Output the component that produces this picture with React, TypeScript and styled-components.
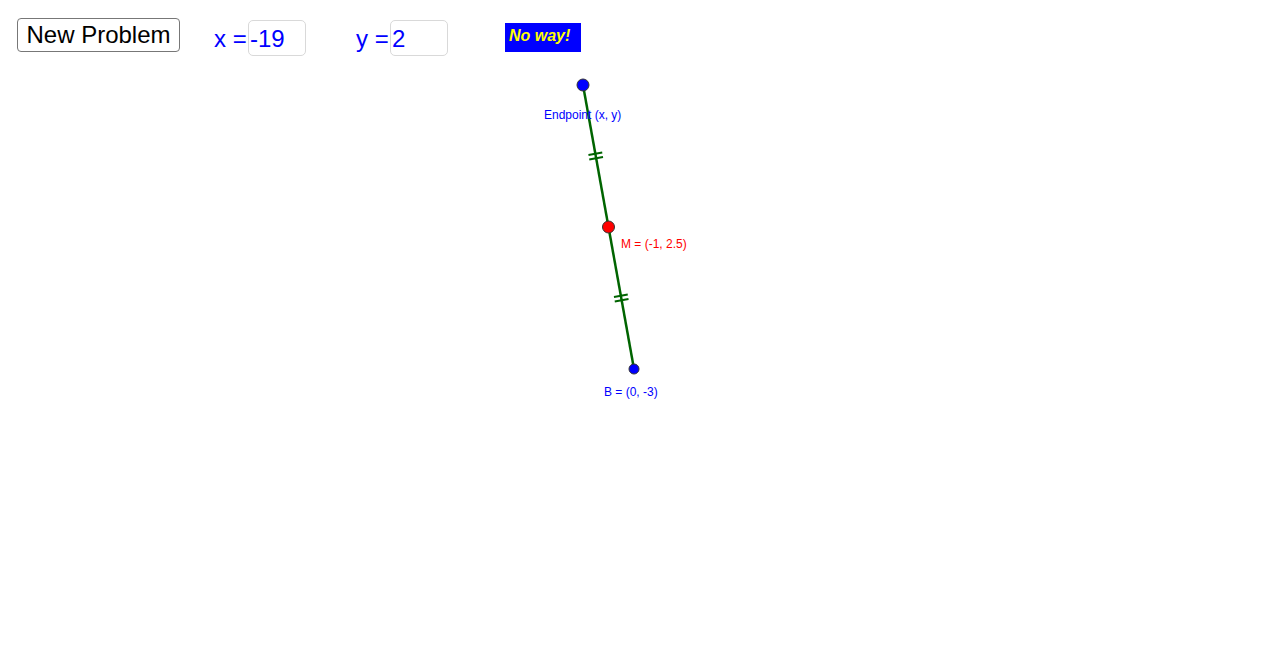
import React from "react";
import styled, { createGlobalStyle } from "styled-components";

const Global = createGlobalStyle`
  html, body { margin: 0; padding: 0; background: #ffffff; }
  body { font-family: "Liberation Sans", Arial, sans-serif; }
`;

const Page = styled.div`
  width: 1280px;
  height: 664px;
  background: #ffffff;
  overflow: hidden;
`;

const Toolbar = styled.div`
  display: flex;
  align-items: flex-start;
  height: 70px;
  padding-left: 17px;
  box-sizing: border-box;
`;

const Button = styled.button`
  margin-top: 18px;
  width: 163px;
  height: 34px;
  box-sizing: border-box;
  border: 1px solid #777777;
  border-radius: 4px;
  background: #ffffff;
  color: #000000;
  font-family: "Liberation Sans", Arial, sans-serif;
  font-size: 24px;
  line-height: 30px;
  padding: 0;
  text-align: center;
`;

const Field = styled.div<{ $gap: number }>`
  display: flex;
  align-items: center;
  margin-left: ${(p) => p.$gap}px;
  margin-top: 20px;
  height: 36px;
`;

const FieldLabel = styled.span`
  color: #0000ff;
  font-size: 24px;
  line-height: 36px;
  width: 34px;
  padding-top: 2px;
  white-space: pre;
`;

const Input = styled.div`
  width: 58px;
  height: 36px;
  box-sizing: border-box;
  border: 1px solid #d9d9d9;
  border-radius: 5px;
  color: #0000ff;
  font-size: 24px;
  line-height: 36px;
  padding-left: 1px;
`;

const Verdict = styled.div`
  margin-left: 57px;
  margin-top: 23px;
  width: 76px;
  height: 29px;
  box-sizing: border-box;
  background: #0000ff;
  color: #ffff00;
  font-weight: bold;
  font-style: italic;
  font-size: 16px;
  line-height: 26px;
  padding-left: 4px;
`;

const Canvas = styled.svg`
  display: block;
`;

const A = { x: 583, y: 85 };
const M = { x: 608.5, y: 227 };
const B = { x: 634, y: 369 };

function Ticks({ cx, cy }: { cx: number; cy: number }) {
  const dx = B.x - A.x;
  const dy = B.y - A.y;
  const len = Math.hypot(dx, dy);
  const ux = dx / len;
  const uy = dy / len;
  const px = uy;
  const py = -ux;
  const h = 7;
  return (
    <g stroke="#006400" strokeWidth={2}>
      {[-2.2, 2.2].map((o) => {
        const mx = cx + ux * o;
        const my = cy + uy * o;
        return (
          <line
            key={o}
            x1={mx - px * h}
            y1={my - py * h}
            x2={mx + px * h}
            y2={my + py * h}
          />
        );
      })}
    </g>
  );
}

export default function App() {
  return (
    <Page>
      <Global />
      <Toolbar>
        <Button>New Problem</Button>
        <Field $gap={34}>
          <FieldLabel>x =</FieldLabel>
          <Input>-19</Input>
        </Field>
        <Field $gap={50}>
          <FieldLabel>y =</FieldLabel>
          <Input>2</Input>
        </Field>
        <Verdict>No way!</Verdict>
      </Toolbar>
      <Canvas width={1280} height={594} viewBox="0 70 1280 594">
        <line x1={A.x} y1={A.y} x2={B.x} y2={B.y} stroke="#006400" strokeWidth={2.5} />
        <Ticks cx={(A.x + M.x) / 2} cy={(A.y + M.y) / 2} />
        <Ticks cx={(M.x + B.x) / 2} cy={(M.y + B.y) / 2} />
        <circle cx={A.x} cy={A.y} r={6} fill="#0000ff" stroke="#333333" strokeWidth={1} />
        <circle cx={M.x} cy={M.y} r={6} fill="#ff0000" stroke="#333333" strokeWidth={1} />
        <circle cx={B.x} cy={B.y} r={5} fill="#0000ff" stroke="#333333" strokeWidth={1} />
        <g fontFamily='"Liberation Sans", Arial, sans-serif' fontSize={12}>
          <text x={544} y={119} fill="#0000ff">Endpoint (x, y)</text>
          <text x={621} y={248} fill="#ff0000">M = (-1, 2.5)</text>
          <text x={604} y={396} fill="#0000ff">B = (0, -3)</text>
        </g>
      </Canvas>
    </Page>
  );
}
